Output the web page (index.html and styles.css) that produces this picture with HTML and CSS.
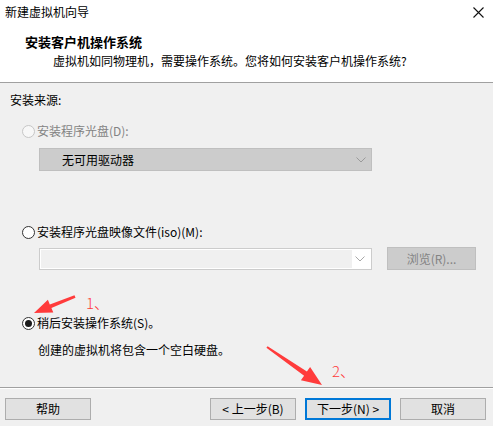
FILE: index.html
```html
<!DOCTYPE html>
<html lang="zh-CN">
<head>
  <meta charset="UTF-8">
  <meta name="viewport" content="width=device-width, initial-scale=1.0">
  <title>新建虚拟机向导</title>
  <link rel="stylesheet" href="styles.css">
</head>
<body>
  <div class="wizard">
    <div class="titlebar">
      <span class="title">新建虚拟机向导</span>
      <svg class="close" width="11" height="11" viewBox="0 0 11 11">
        <path d="M0.5 0.5 L10.5 10.5 M10.5 0.5 L0.5 10.5" stroke="#111" stroke-width="1.1" fill="none"/>
      </svg>
    </div>
    <div class="header">
      <h2>安装客户机操作系统</h2>
      <p>虚拟机如同物理机，需要操作系统。您将如何安装客户机操作系统?</p>
    </div>

    <div class="content">
      <div class="section-label">安装来源:</div>

      <div class="option disabled first">
        <span class="radio"></span>
        <span>安装程序光盘(D):</span>
      </div>
      <div class="combo combo-disabled">
        <span>无可用驱动器</span>
        <svg class="chevron" width="10" height="6" viewBox="0 0 10 6"><path d="M0.5 0.5 L5 5 L9.5 0.5" stroke="#9a9a9a" fill="none"/></svg>
      </div>

      <div class="option iso">
        <span class="radio"></span>
        <span>安装程序光盘映像文件(iso)(M):</span>
      </div>
      <div class="iso-row">
        <div class="combo combo-empty">
          <span class="field"></span>
          <svg class="chevron" width="10" height="6" viewBox="0 0 10 6"><path d="M0.5 0.5 L5 5 L9.5 0.5" stroke="#a8a8a8" fill="none"/></svg>
        </div>
        <button class="btn btn-disabled">浏览(R)...</button>
      </div>

      <div class="option later">
        <span class="radio checked"></span>
        <span>稍后安装操作系统(S)。</span>
      </div>
      <div class="note">创建的虚拟机将包含一个空白硬盘。</div>
    </div>

    <div class="footer">
      <button class="btn">帮助</button>
      <div class="nav">
        <button class="btn">&lt; 上一步(B)</button>
        <button class="btn btn-default">下一步(N) &gt;</button>
        <button class="btn">取消</button>
      </div>
    </div>

    <!-- red annotation arrows drawn over the dialog -->
    <svg class="marks" width="493" height="426" viewBox="0 0 493 426">
      <polygon points="74.5,295.3 49.8,304.4 47.9,299.8 34,313 53.3,312.6 51.4,308.1 75.5,297.7" fill="#ff3b3b"/>
      <polygon points="266.4,347.8 304.1,375.7 300.9,380.2 322,385 310.1,367 306.9,371.5 267.6,346.2" fill="#ff3b3b"/>
    </svg>
    <span class="mark mark-1">1、</span>
    <span class="mark mark-2">2、</span>
  </div>
</body>
</html>
```

FILE: styles.css
```css
body {
  margin: 0;
  font-family: "Noto Sans CJK SC", "Noto Sans", sans-serif;
  font-size: 12px;
  color: #000;
}
.wizard {
  position: relative;
  width: 493px;
  height: 426px;
  background: #f0f0f0;
  overflow: hidden;
}
.titlebar {
  height: 24px;
  background: #fff;
  display: flex;
  align-items: center;
  justify-content: space-between;
  padding: 0 9px 0 5px;
  line-height: 16px;
}
.close {
  display: block;
}
.header {
  background: #fff;
  height: 48px;
  padding: 10px 0 0 0;
  border-bottom: 1px solid #a0a0a0;
}
.header h2 {
  margin: 0;
  padding-left: 25px;
  font-size: 13px;
  line-height: 16px;
  font-weight: bold;
}
.header p {
  margin: 3px 0 0;
  padding-left: 53px;
  line-height: 16px;
}
.content {
  height: 304px;
  padding-top: 9px;
  box-sizing: border-box;
  line-height: 16px;
}
.section-label {
  padding-left: 10px;
}
.option {
  display: flex;
  align-items: center;
  gap: 2px;
  padding-left: 22px;
}
.option.first {
  margin-top: 15px;
}
.option.iso {
  margin-top: 53px;
}
.option.later {
  margin-top: 45px;
}
.option.disabled {
  color: #838383;
}
.radio {
  width: 13px;
  height: 13px;
  border: 1px solid #333;
  border-radius: 50%;
  background: #fff;
  box-sizing: border-box;
  position: relative;
}
.disabled .radio {
  border-color: #c6c6c6;
  background: #f7f7f7;
}
.radio.checked::after {
  content: "";
  position: absolute;
  left: 2px;
  top: 2px;
  width: 7px;
  height: 7px;
  border-radius: 50%;
  background: #1a1a1a;
}
.combo {
  margin-left: 39px;
  width: 333px;
  box-sizing: border-box;
  display: flex;
  align-items: center;
  justify-content: space-between;
}
.combo-disabled {
  margin-top: 9px;
  height: 23px;
  background: #cccccc;
  border: 1px solid #bfbfbf;
  padding: 0 5px 0 22px;
}
.combo-empty {
  height: 22px;
  background: #fff;
  border: 1px solid #cccccc;
  padding: 1px 6px 1px 1px;
  align-items: stretch;
}
.combo-empty .field {
  width: 311px;
  background: #f0f0f0;
}
.combo-empty .chevron {
  align-self: center;
}
.iso-row {
  margin-top: 7px;
  display: flex;
  align-items: flex-start;
  gap: 15px;
}
.iso-row .combo {
  margin-top: 1px;
}
.note {
  margin-top: 11px;
  padding-left: 38px;
}
.footer {
  border-top: 1px solid #a0a0a0;
  box-shadow: inset 0 1px 0 #fff;
  height: 38px;
  box-sizing: border-box;
  padding: 10px 7px 0 5px;
  display: flex;
  justify-content: space-between;
  align-items: flex-start;
}
.nav {
  display: flex;
  gap: 9px;
}
.btn {
  font-family: inherit;
  font-size: 12px;
  width: 86px;
  height: 22px;
  padding: 0;
  margin: 0;
  line-height: 18px;
  background: #e1e1e1;
  border: 1px solid #adadad;
  color: #000;
}
.btn-default {
  border: 2px solid #0078d7;
}
.btn-disabled {
  width: 89px;
  height: 23px;
  background: #cccccc;
  border-color: #bfbfbf;
  color: #838383;
}
.marks {
  position: absolute;
  left: 0;
  top: 0;
  pointer-events: none;
}
.mark {
  position: absolute;
  color: #ff3b3b;
  font-family: "Noto Sans CJK SC", sans-serif;
  font-weight: 300;
  font-size: 15px;
  line-height: 18px;
}
.mark-1 {
  left: 86px;
  top: 294px;
}
.mark-2 {
  left: 332px;
  top: 362px;
}
```
